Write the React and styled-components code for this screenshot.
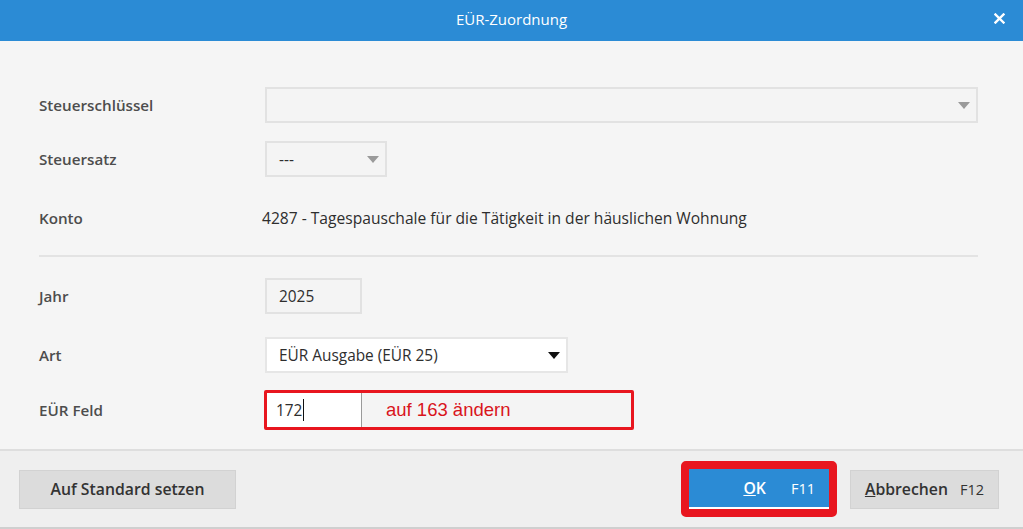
import React from 'react'
import styled, { createGlobalStyle } from 'styled-components'

const GlobalStyle = createGlobalStyle`
  html, body {
    margin: 0;
    padding: 0;
    background: #f5f5f5;
    font-family: 'Open Sans', 'Noto Sans', sans-serif;
  }
`

export default function App() {
  return (
    <>
      <GlobalStyle />
      <Dialog>
        <TitleBar>
          <Title>EÜR-Zuordnung</Title>
          <CloseButton aria-label='Schließen'>
            <svg width='11' height='11' viewBox='0 0 11 11'>
              <path d='M1.5 1.5 L9.5 9.5 M9.5 1.5 L1.5 9.5' stroke='#fff' strokeWidth='2.4' strokeLinecap='square' />
            </svg>
          </CloseButton>
        </TitleBar>

        <Body>
          <Row $top={46}>
            <Label>Steuerschlüssel</Label>
            <Select $width={713} $disabled>
              <span />
              <Arrow $color='#9a9a9a' />
            </Select>
          </Row>
          <Row $top={18}>
            <Label>Steuersatz</Label>
            <Select $width={122} $disabled>
              <span>---</span>
              <Arrow $color='#9a9a9a' />
            </Select>
          </Row>
          <Row $top={23}>
            <Label>Konto</Label>
            <Value>4287 - Tagespauschale für die Tätigkeit in der häuslichen Wohnung</Value>
          </Row>

          <Divider />

          <Row $top={0}>
            <Label>Jahr</Label>
            <Select $width={97} $disabled>
              <span>2025</span>
            </Select>
          </Row>
          <Row $top={23}>
            <Label>Art</Label>
            <Select $width={303}>
              <span>EÜR Ausgabe (EÜR 25)</span>
              <Arrow $color='#111' />
            </Select>
          </Row>
          <Row $top={17} $height={40}>
            <Label>EÜR Feld</Label>
            <Highlight>
              <FieldInput>
                172<Caret />
              </FieldInput>
              <Note>auf 163 ändern</Note>
            </Highlight>
          </Row>
        </Body>

        <Footer>
          <GrayButton $width={217}>Auf Standard setzen</GrayButton>
          <Spacer />
          <OkFrame>
            <OkButton>
              <u>O</u>K<Key $gap={25}>F11</Key>
            </OkButton>
          </OkFrame>
          <GrayButton $width={149}>
            <u>A</u>bbrechen<Key $gap={12}>F12</Key>
          </GrayButton>
        </Footer>
      </Dialog>
    </>
  )
}

const Dialog = styled.div`
  width: 1023px;
  height: 529px;
  display: flex;
  flex-direction: column;
  background: #f5f5f5;
  overflow: hidden;
`

const TitleBar = styled.div`
  height: 41px;
  flex: none;
  background: #2b8bd5;
  display: flex;
  align-items: center;
  justify-content: center;
  position: relative;
`

const Title = styled.div`
  color: #fff;
  font-size: 15px;
  margin-top: -3px;
`

const CloseButton = styled.button`
  position: absolute;
  right: 17px;
  top: 11px;
  width: 14px;
  height: 14px;
  padding: 0;
  border: none;
  background: transparent;
  display: flex;
  align-items: center;
  justify-content: center;
`

const Body = styled.div`
  flex: 1;
  padding: 0 45px 0 39px;
  display: flex;
  flex-direction: column;
`

const Row = styled.div`
  display: grid;
  grid-template-columns: 226px 1fr;
  align-items: center;
  height: ${p => p.$height || 36}px;
  margin-top: ${p => p.$top}px;
`

const Label = styled.div`
  font-size: 15.2px;
  font-weight: 600;
  color: #4d4d4d;
`

const Value = styled.div`
  font-size: 15.6px;
  color: #2e2e2e;
  margin-left: -3px;
`

const Select = styled.div`
  width: ${p => p.$width}px;
  height: 36px;
  box-sizing: border-box;
  border: 2px solid ${p => (p.$disabled ? '#e2e2e2' : '#e6e6e6')};
  background: ${p => (p.$disabled ? '#f4f4f4' : '#fff')};
  display: flex;
  align-items: center;
  justify-content: space-between;
  padding: 0 4px 0 12px;
  font-size: 15.4px;
  color: #2e2e2e;
`

const Arrow = styled.span`
  width: 0;
  height: 0;
  border-left: 6px solid transparent;
  border-right: 6px solid transparent;
  border-top: 7px solid ${p => p.$color};
  margin-right: 2px;
`

const Divider = styled.div`
  height: 2px;
  background: #e3e3e3;
  margin: 19px 0 21px;
`

const Highlight = styled.div`
  width: 370px;
  height: 40px;
  box-sizing: border-box;
  margin-left: -1px;
  border: 3px solid #e8161f;
  border-radius: 2px;
  display: flex;
  align-items: stretch;
  background: #f4f4f4;
`

const FieldInput = styled.div`
  width: 95px;
  flex: none;
  background: #fff;
  border-right: 1px solid #9a9a9a;
  display: flex;
  align-items: center;
  padding-left: 9px;
  box-sizing: border-box;
  font-size: 15.4px;
  color: #2e2e2e;
`

const Caret = styled.span`
  display: inline-block;
  width: 1px;
  height: 22px;
  background: #111;
  margin-left: 1px;
`

const Note = styled.div`
  display: flex;
  align-items: center;
  padding-left: 24px;
  font-family: 'Liberation Sans', Arial, sans-serif;
  font-size: 18.5px;
  color: #d9141c;
`

const Footer = styled.div`
  height: 80px;
  flex: none;
  box-sizing: border-box;
  background: #efefef;
  border-top: 2px solid #dedede;
  border-bottom: 2px solid #cfcfcf;
  display: flex;
  align-items: center;
  padding: 0 24px 0 19px;
`

const Spacer = styled.div`
  flex: 1;
`

const GrayButton = styled.button`
  width: ${p => p.$width}px;
  height: 39px;
  box-sizing: border-box;
  border: 1px solid #d2d2d2;
  background: #dcdcdc;
  font-family: 'Open Sans', 'Noto Sans', sans-serif;
  font-size: 15.8px;
  font-weight: 600;
  color: #333;
  display: flex;
  align-items: center;
  justify-content: center;
  padding: 0;
`

const OkFrame = styled.div`
  border: 8px solid #e8161f;
  border-radius: 5px;
  margin-right: 13px;
  display: flex;
`

const OkButton = styled.button`
  width: 140px;
  height: 40px;
  box-sizing: border-box;
  border: none;
  border-bottom: 2px solid #fff;
  background: #2b8bd5;
  color: #fff;
  font-family: 'Open Sans', 'Noto Sans', sans-serif;
  font-size: 15.8px;
  font-weight: 600;
  display: flex;
  align-items: center;
  justify-content: flex-end;
  padding: 0 14px 0 0;
`

const Key = styled.span`
  font-weight: 400;
  font-size: 14.5px;
  margin-left: ${p => p.$gap}px;
`
